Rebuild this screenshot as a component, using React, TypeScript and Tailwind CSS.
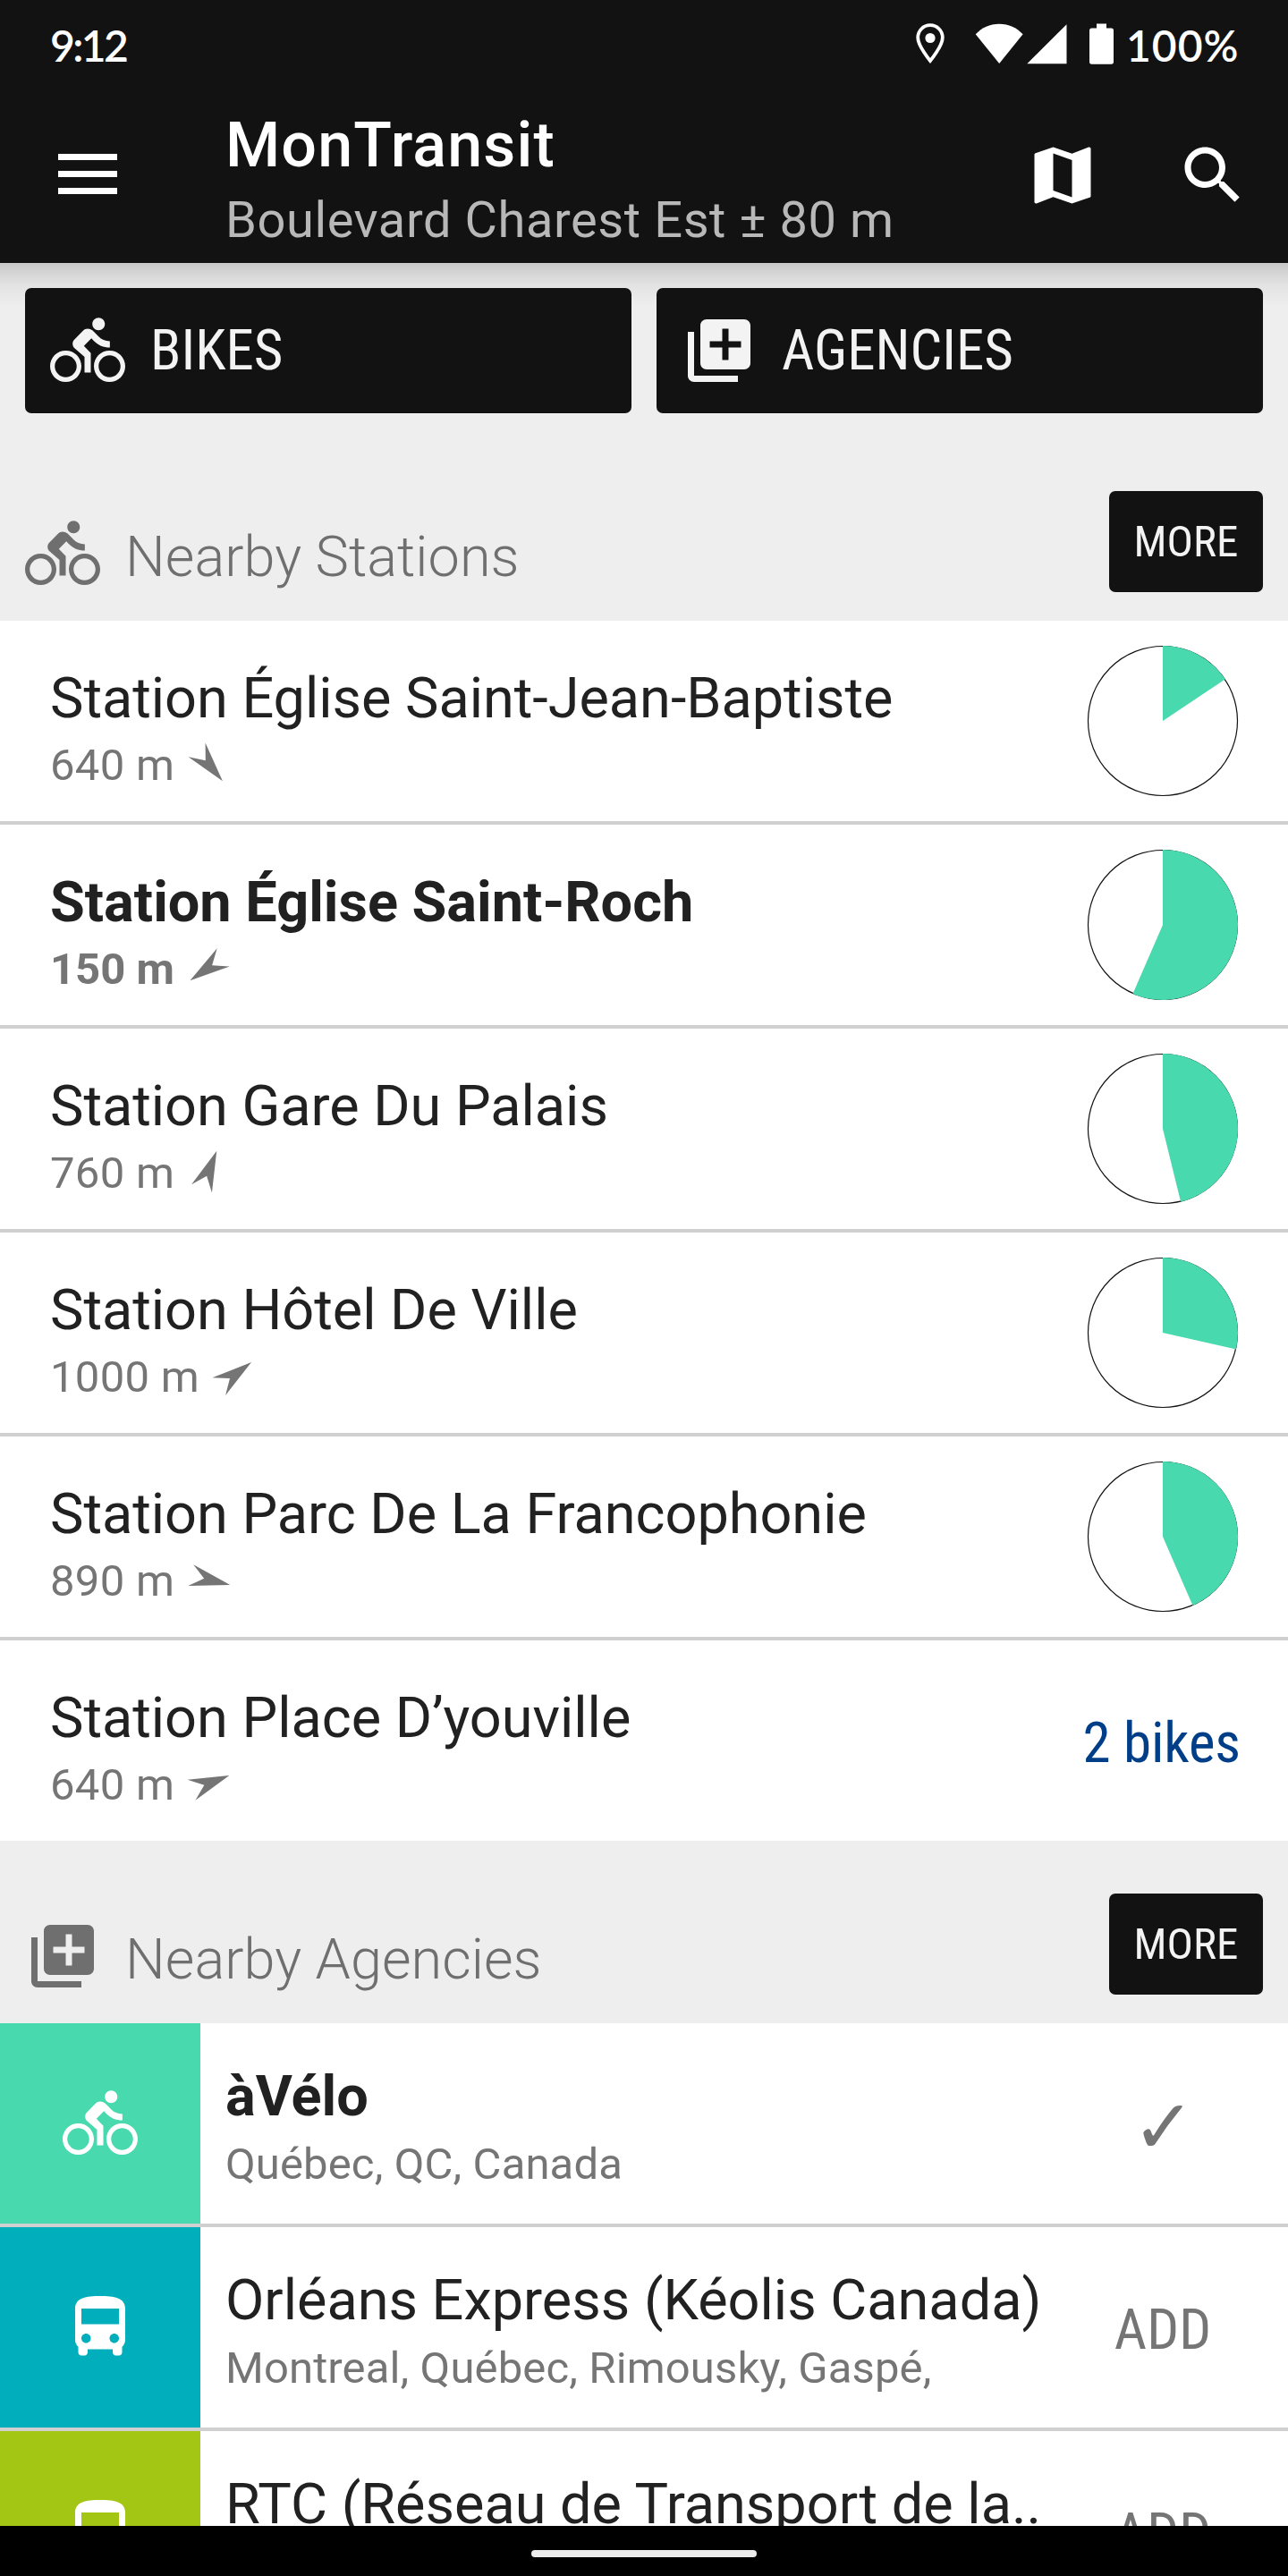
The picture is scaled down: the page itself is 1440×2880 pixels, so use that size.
import type { ReactNode } from "react";

const BIKE =
  "M15.5 5.5c1.1 0 2-.9 2-2s-.9-2-2-2-2 .9-2 2 .9 2 2 2zM5 12c-2.8 0-5 2.2-5 5s2.2 5 5 5 5-2.2 5-5-2.2-5-5-5zm0 8.5c-1.9 0-3.5-1.6-3.5-3.5s1.6-3.5 3.5-3.5 3.5 1.6 3.5 3.5-1.6 3.5-3.5 3.5zm5.8-10l2.4-2.4.8.8c1.3 1.3 3 2.1 5.1 2.1V9c-1.5 0-2.7-.6-3.6-1.5l-1.9-1.9c-.5-.4-1-.6-1.6-.6s-1.1.2-1.4.6L7.8 8.4c-.4.4-.6.9-.6 1.4 0 .6.2 1.1.6 1.4L11 14v5h2v-6.2l-2.2-2.3zM19 12c-2.8 0-5 2.2-5 5s2.2 5 5 5 5-2.2 5-5-2.2-5-5-5zm0 8.5c-1.9 0-3.5-1.6-3.5-3.5s1.6-3.5 3.5-3.5 3.5 1.6 3.5 3.5-1.6 3.5-3.5 3.5z";
const LIBRARY_ADD =
  "M4 6H2v14c0 1.1.9 2 2 2h14v-2H4V6zm16-4H8c-1.1 0-2 .9-2 2v12c0 1.1.9 2 2 2h12c1.1 0 2-.9 2-2V4c0-1.1-.9-2-2-2zm-1 9h-4v4h-2v-4H9V9h4V5h2v4h4v2z";
const BUS =
  "M4 16c0 .88.39 1.67 1 2.22V20c0 .55.45 1 1 1h1c.55 0 1-.45 1-1v-1h8v1c0 .55.45 1 1 1h1c.55 0 1-.45 1-1v-1.78c.61-.55 1-1.34 1-2.22V6c0-3.5-3.58-4-8-4s-8 .5-8 4v10zm3.5 1c-.83 0-1.5-.67-1.5-1.5S6.67 14 7.5 14s1.5.67 1.5 1.5S8.33 17 7.5 17zm9 0c-.83 0-1.5-.67-1.5-1.5s.67-1.5 1.5-1.5 1.5.67 1.5 1.5-.67 1.5-1.5 1.5zm1.500-6H6V6h12v5z";
const MAP =
  "M20.5 3l-.16.03L15 5.1 9 3 3.36 4.9c-.21.07-.36.25-.36.48V20.5c0 .28.22.5.5.5l.16-.03L9 18.9l6 2.1 5.64-1.9c.21-.07.36-.25.36-.48V3.5c0-.28-.22-.5-.5-.5zM15 19l-6-2.11V5l6 2.11V19z";
const SEARCH =
  "M15.5 14h-.79l-.28-.27C15.41 12.59 16 11.11 16 9.5 16 5.91 13.09 3 9.5 3S3 5.91 3 9.5 5.91 16 9.5 16c1.61 0 3.09-.59 4.23-1.57l.27.28v.79l5 4.99L20.49 19l-4.99-5zm-6 0C7.01 14 5 11.99 5 9.5S7.01 5 9.5 5 14 7.01 14 9.5 11.99 14 9.5 14z";

function Icon({ d, className = "" }: { d: string; className?: string }) {
  return (
    <svg viewBox="0 0 24 24" fill="currentColor" className={`size-[84px] shrink-0 ${className}`}>
      <path d={d} />
    </svg>
  );
}

function StatusBar() {
  return (
    <div className="flex h-[98px] items-center justify-between pr-[56px] pl-[56px] font-['Lato',sans-serif] text-[48px] font-semibold text-white">
      <span className="pt-[3px] tracking-[-2.600px]">9:12</span>
      <div className="flex items-center">
        <svg viewBox="0 0 32 46" className="mr-[34px] h-[46px] w-[32px]" fill="none">
          <path
            d="M16 2.2C8.3 2.2 2.2 8.4 2.2 16c0 9.5 13.8 26 13.8 26s13.8-16.500 13.800-26C29.800 8.400 23.700 2.200 16 2.200z"
            stroke="white"
            strokeWidth="3.8"
          />
          <circle cx="16" cy="16.500" r="5.600" fill="white" />
        </svg>
        <svg viewBox="0 0 103 46" className="h-[46px] w-[103px]" fill="white">
          <path d="M0.700 12.300C8 4.600 16.500 0.700 27.200 0.700S46.300 4.600 53.600 12.300L27.200 45z" />
          <path d="M102.500 1.200V45.200H58.300z" />
        </svg>
        <svg viewBox="0 0 27 46" className="ml-[25px] h-[46px] w-[27px]" fill="white">
          <path d="M8 0.500h11v5h5.500q2.500 0 2.500 2.500v35q0 2.800-2.500 2.800h-22q-2.500 0-2.500-2.800v-35q0-2.500 2.500-2.500H8z" />
        </svg>
        <span className="ml-[14px] w-[125px] pt-[3px] tracking-[1px] whitespace-nowrap">100%</span>
      </div>
    </div>
  );
}

function AppBar() {
  return (
    <div className="flex h-[196px] items-start">
      <div className="mt-[74px] ml-[65px] flex w-[66px] flex-col gap-[12px]">
        <div className="h-[7px] bg-white" />
        <div className="h-[7px] bg-white" />
        <div className="h-[7px] bg-white" />
      </div>
      <div className="mt-[23px] ml-[121px] flex flex-1 flex-col gap-[10px] whitespace-nowrap">
        <h1 className="text-[70px] leading-[82px] font-medium tracking-[1.150px] text-white">MonTransit</h1>
        <p className="text-[56px] leading-[66px] tracking-[0.580px] text-[#b8b8b8]">Boulevard Charest Est ± 80 m</p>
      </div>
      <div className="mt-[56px] mr-[42px] flex gap-[84px] text-white">
        <Icon d={MAP} />
        <Icon d={SEARCH} />
      </div>
    </div>
  );
}

function BigButton({ icon, children }: { icon: string; children: ReactNode }) {
  return (
    <button className="flex h-[140px] flex-1 items-center gap-[28px] rounded-[7px] bg-[#121212] pl-[28px] font-['Roboto_Condensed',Roboto,sans-serif] text-[63px] text-[#f3f3f3]">
      <Icon d={icon} />
      <span>{children}</span>
    </button>
  );
}

function SectionHeader({ icon, title, height }: { icon: string; title: string; height: string }) {
  return (
    <div className={`flex items-end px-[28px] ${height}`}>
      <Icon d={icon} className="mb-[33px] text-[#6f6f6f]" />
      <h2 className="mb-[34px] ml-[28px] flex-1 text-[63px] leading-[74px] font-light tracking-[0.040px] text-[#6f6f6f]">{title}</h2>
      <button className="mb-[32px] h-[113px] w-[172px] rounded-[7px] bg-[#121212] font-['Roboto_Condensed',Roboto,sans-serif] text-[49px] text-[#f3f3f3]">
        MORE
      </button>
    </div>
  );
}

type Station = { name: string; distance: string; bearing: number; bold?: boolean; fill?: number; label?: string };

const stations: Station[] = [
  { name: "Station Église Saint-Jean-Baptiste", distance: "640 m", bearing: 140.5, fill: 56.25 },
  { name: "Station Église Saint-Roch", distance: "150 m", bearing: 235.3, fill: 203.5, bold: true },
  { name: "Station Gare Du Palais", distance: "760 m", bearing: 21.7, fill: 166.2 },
  { name: "Station Hôtel De Ville", distance: "1000 m", bearing: 53.2, fill: 102.7 },
  { name: "Station Parc De La Francophonie", distance: "890 m", bearing: 103.8, fill: 156.5 },
  { name: "Station Place D’youville", distance: "640 m", bearing: 69.1, label: "2 bikes" },
];

function Compass({ bearing }: { bearing: number }) {
  return (
    <svg viewBox="-24 -24 48 48" className="mt-[3px] ml-[14px] size-[48px] overflow-visible" fill="#757575">
      <path d="M0 -25L12.300 20.300L0 5L-12.300 20.300z" transform={`rotate(${bearing})`} />
    </svg>
  );
}

function Pie({ degrees }: { degrees: number }) {
  const a = (degrees * Math.PI) / 180;
  const x = 84 * Math.sin(a);
  const y = -84 * Math.cos(a);
  return (
    <svg viewBox="-84 -84 168 168" className="-mt-px size-[168px] overflow-visible">
      <circle r="83.500" fill="none" stroke="#121212" strokeWidth="1.200" />
      <path d={`M0 0V-84A84 84 0 ${degrees > 180 ? 1 : 0} 1 ${x} ${y}z`} fill="#48d9ae" />
    </svg>
  );
}

function StationRow({ s }: { s: Station }) {
  return (
    <li className="flex h-[224px] justify-between pr-[56px] pl-[56px]">
      <div className={`mt-[50px] whitespace-nowrap ${s.bold ? "font-bold" : ""}`}>
        <p className={`text-[63px] leading-[74px] text-[#212121] ${s.bold ? "" : "tracking-[-0.020px]"}`}>{s.name}</p>
        <p
          className={`mt-[9px] flex h-[58px] text-[49px] leading-[58px] text-[#757575] ${s.bold ? "" : "tracking-[0.300px]"}`}
        >
          {s.distance}
          <Compass bearing={s.bearing} />
        </p>
      </div>
      <div className="flex items-center">
        {s.fill !== undefined && <Pie degrees={s.fill} />}
        {s.label && (
          <span className="-mr-[3px] pt-[6px] font-['Roboto_Condensed',Roboto,sans-serif] text-[63px] tracking-[-0.100px] text-[#003f87]">
            {s.label}
          </span>
        )}
      </div>
    </li>
  );
}

type Agency = { name: string; place: string; color: string; icon: string; added?: boolean };

const agencies: Agency[] = [
  { name: "àVélo", place: "Québec, QC, Canada", color: "bg-[#48d9ae]", icon: BIKE, added: true },
  { name: "Orléans Express (Kéolis Canada)", place: "Montreal, Québec, Rimousky, Gaspé,", color: "bg-[#00aebc]", icon: BUS },
  { name: "RTC (Réseau de Transport de la..", place: "Québec, QC, Canada", color: "bg-[#a3c614]", icon: BUS },
];

function AgencyRow({ a }: { a: Agency }) {
  return (
    <li className="flex h-[224px] shrink-0">
      <div className={`flex w-[224px] items-center justify-center text-white ${a.color}`}>
        <Icon d={a.icon} />
      </div>
      <div className="mt-[45px] ml-[28px] flex-1 whitespace-nowrap">
        <p className={`text-[63px] leading-[74px] text-[#212121] ${a.added ? "font-bold" : ""}`}>{a.name}</p>
        <p className="mt-[9.500px] text-[49px] leading-[58px] tracking-[0.130px] text-[#757575]">{a.place}</p>
      </div>
      <div className="mr-[56px] flex w-[168px] items-center justify-center text-[#757575]">
        {a.added ? (
          <span className="pt-[7px] pl-[2px] font-['DejaVu_Sans',sans-serif] text-[84px] leading-none">✓</span>
        ) : (
          <span className="pt-[6px] font-['Roboto_Condensed',Roboto,sans-serif] text-[63px]">ADD</span>
        )}
      </div>
    </li>
  );
}

export default function App() {
  return (
    <div className="flex h-[2880px] w-[1440px] flex-col overflow-hidden bg-[#eeeeee] font-['Roboto',sans-serif]">
      <header className="relative h-[294px] shrink-0 bg-[#121212]">
        <StatusBar />
        <AppBar />
        <div className="absolute top-full left-0 h-[48px] w-full bg-linear-to-b from-black/16 via-black/5 to-transparent" />
      </header>
      <main className="flex min-h-0 flex-1 flex-col overflow-hidden">
        <div className="relative flex shrink-0 gap-[28px] px-[28px] pt-[28px]">
          <BigButton icon={BIKE}>BIKES</BigButton>
          <BigButton icon={LIBRARY_ADD}>AGENCIES</BigButton>
        </div>
        <SectionHeader icon={BIKE} title="Nearby Stations" height="h-[232px] shrink-0" />
        <ul className="shrink-0 divide-y-4 divide-[#d0d0d0] bg-white [&>li]:box-content">
          {stations.map((s) => (
            <StationRow key={s.name} s={s} />
          ))}
        </ul>
        <SectionHeader icon={LIBRARY_ADD} title="Nearby Agencies" height="h-[204px] shrink-0" />
        <ul className="shrink-0 divide-y-4 divide-[#d0d0d0] bg-white [&>li]:box-content">
          {agencies.map((a) => (
            <AgencyRow key={a.name} a={a} />
          ))}
        </ul>
      </main>
      <nav className="flex h-[56px] shrink-0 justify-center bg-black pt-[27px]">
        <div className="h-[8px] w-[252px] rounded-[4px] bg-[#ececec]" />
      </nav>
    </div>
  );
}
